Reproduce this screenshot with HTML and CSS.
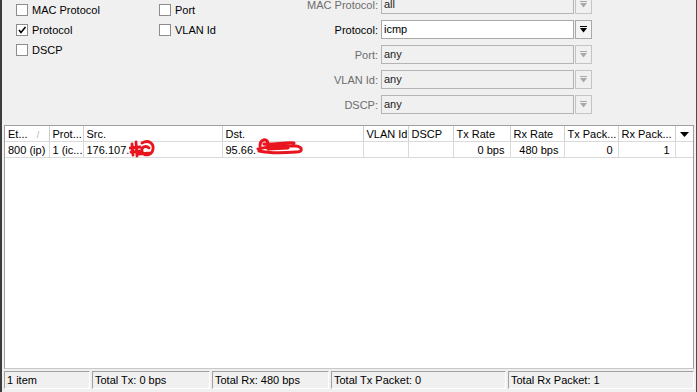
FILE: index.html
```html
<!DOCTYPE html>
<html lang="en">
<head>
    <meta charset="UTF-8">
    <meta name="viewport" content="width=device-width, initial-scale=1.0">
    <title>Torch</title>
    <link rel="stylesheet" href="styles.css">
</head>
<body>
    <div class="window">
        <div class="filters">
            <div class="checks">
                <label class="check"><span class="box"></span>MAC Protocol</label>
                <label class="check"><span class="box"></span>Port</label>
                <label class="check"><span class="box">
                    <svg width="10" height="10" viewBox="0 0 10 10"><polyline points="2,5 4,7.5 8.5,2" fill="none" stroke="#000" stroke-width="1.6"/></svg>
                </span>Protocol</label>
                <label class="check"><span class="box"></span>VLAN Id</label>
                <label class="check"><span class="box"></span>DSCP</label>
            </div>

            <div class="fields">
                <div class="field-row disabled">
                    <span class="field-label">MAC Protocol:</span>
                    <span class="field-input">all</span>
                    <span class="field-btn"><svg width="9" height="8" viewBox="0 0 9 8"><rect x="1" y="0" width="7" height="1"/><polygon points="1,2 8,2 4.5,6.5"/></svg></span>
                </div>
                <div class="field-row">
                    <span class="field-label">Protocol:</span>
                    <span class="field-input">icmp</span>
                    <span class="field-btn"><svg width="9" height="8" viewBox="0 0 9 8"><rect x="1" y="0" width="7" height="1"/><polygon points="1,2 8,2 4.5,6.5"/></svg></span>
                </div>
                <div class="field-row disabled">
                    <span class="field-label">Port:</span>
                    <span class="field-input">any</span>
                    <span class="field-btn"><svg width="9" height="8" viewBox="0 0 9 8"><rect x="1" y="0" width="7" height="1"/><polygon points="1,2 8,2 4.5,6.5"/></svg></span>
                </div>
                <div class="field-row disabled">
                    <span class="field-label">VLAN Id:</span>
                    <span class="field-input">any</span>
                    <span class="field-btn"><svg width="9" height="8" viewBox="0 0 9 8"><rect x="1" y="0" width="7" height="1"/><polygon points="1,2 8,2 4.5,6.5"/></svg></span>
                </div>
                <div class="field-row disabled">
                    <span class="field-label">DSCP:</span>
                    <span class="field-input">any</span>
                    <span class="field-btn"><svg width="9" height="8" viewBox="0 0 9 8"><rect x="1" y="0" width="7" height="1"/><polygon points="1,2 8,2 4.5,6.5"/></svg></span>
                </div>
            </div>
        </div>

        <div class="list">
            <table class="grid">
                <colgroup>
                    <col style="width: 44px"><col style="width: 34px"><col style="width: 139px"><col style="width: 141px">
                    <col style="width: 45px"><col style="width: 45px"><col style="width: 57px"><col style="width: 54px">
                    <col style="width: 54px"><col style="width: 57px"><col>
                </colgroup>
                <thead>
                    <tr>
                        <th>Et... <span class="sort">/</span></th>
                        <th>Prot...</th>
                        <th>Src.</th>
                        <th>Dst.</th>
                        <th>VLAN Id</th>
                        <th>DSCP</th>
                        <th>Tx Rate</th>
                        <th>Rx Rate</th>
                        <th>Tx Pack...</th>
                        <th>Rx Pack...</th>
                        <th class="menu"><svg width="9" height="6" viewBox="0 0 9 6"><polygon points="0,0 9,0 4.5,5"/></svg></th>
                    </tr>
                </thead>
                <tbody>
                    <tr>
                        <td>800 (ip)</td>
                        <td>1 (ic...</td>
                        <td>176.107.<span class="redact"><svg class="scribble src" width="26" height="20" viewBox="0 0 26 20"><path d="M3,6 L4,17 M7,4 L8,18 M1,10 L11,9 M2,14 L12,13 M13,5 C20,1 25,6 24,11 C23,18 14,19 13,13 C12,9 17,7 20,10 M10,16 L22,15" fill="none" stroke="#e8141e" stroke-width="2.8" stroke-linecap="round"/></svg></span></td>
                        <td>95.66.<span class="redact"><svg class="scribble dst" width="48" height="18" viewBox="0 0 48 18"><path d="M4,9 C4,2 11,1 12,6 M2,12 C10,10 25,8 40,9 C47,10 47,15 40,15 C28,16 12,16 3,14 M8,7 C16,8 30,5 38,6 M12,12 L32,11" fill="none" stroke="#e8141e" stroke-width="3" stroke-linecap="round"/></svg></span></td>
                        <td></td>
                        <td></td>
                        <td class="num">0 bps</td>
                        <td class="num">480 bps</td>
                        <td class="num">0</td>
                        <td class="num">1</td>
                        <td class="empty"></td>
                    </tr>
                </tbody>
            </table>
        </div>

        <div class="status">
            <span class="cell" style="width: 82px">1 item</span>
            <span class="cell" style="width: 114px">Total Tx: 0 bps</span>
            <span class="cell" style="width: 113px">Total Rx: 480 bps</span>
            <span class="cell" style="width: 171px">Total Tx Packet: 0</span>
            <span class="cell cell-last">Total Rx Packet: 1</span>
        </div>
    </div>
</body>
</html>
```

FILE: styles.css
```css
html, body {
    margin: 0;
    padding: 0;
    background-color: #f0f0f0;
}

body {
    font-family: "Liberation Sans", Arial, sans-serif;
    font-size: 11px;
    color: #000;
}

.window {
    height: 392px;
    box-sizing: border-box;
    border-left: 2px solid #3c3c3c;
    border-right: 1px solid #4a4a4a;
    display: flex;
    flex-direction: column;
    overflow: hidden;
}

/* filtros de cima */
.filters {
    display: flex;
    height: 125px;
    flex-shrink: 0;
}

.checks {
    width: 288px;
    padding-left: 14px;
    box-sizing: border-box;
    display: grid;
    grid-template-columns: 143px 1fr;
    grid-auto-rows: 20px;
    align-content: start;
}

.check {
    display: flex;
    align-items: center;
    height: 20px;
}

.box {
    width: 10px;
    height: 10px;
    border: 1px solid #8c8c8c;
    background-color: #fff;
    margin-right: 4px;
    display: flex;
    align-items: center;
    justify-content: center;
}

.box svg {
    display: block;
}

.fields {
    display: flex;
    flex-direction: column;
    gap: 6px;
    margin-top: -5px;
}

.field-row {
    display: flex;
    align-items: center;
    height: 19px;
}

.field-label {
    width: 88px;
    text-align: right;
    margin-right: 3px;
    color: #000;
}

.field-input {
    width: 189px;
    height: 17px;
    line-height: 17px;
    border: 1px solid #a9a9a9;
    background-color: #fff;
    padding-left: 2px;
    box-sizing: content-box;
    margin-right: 1px;
}

.field-btn {
    width: 15px;
    height: 17px;
    border: 1px solid #a9a9a9;
    background-color: #f4f4f4;
    display: flex;
    align-items: center;
    justify-content: center;
}

.field-btn svg {
    fill: #000;
}

.field-row.disabled .field-label {
    color: #6d6d6d;
}

.field-row.disabled .field-input {
    background-color: #f0f0f0;
    border-color: #b4b4b4;
    color: #222;
}

.field-row.disabled .field-btn {
    border-color: #c4c4c4;
    background-color: #f0f0f0;
}

.field-row.disabled .field-btn svg {
    fill: #a8a8a8;
}

/* lista */
.list {
    flex: 1;
    margin: 0 2px 0 2px;
    border: 1px solid #a0a0a0;
    border-bottom-color: #c8c8c8;
    background-color: #fff;
}

.grid {
    border-collapse: collapse;
    table-layout: fixed;
    width: 100%;
}

.grid th, .grid td {
    height: 15px;
    padding: 0 0 0 3px;
    text-align: left;
    font-weight: normal;
    white-space: nowrap;
    overflow: visible;
    border-right: 1px solid #dadada;
    border-bottom: 1px solid #dadada;
}

.grid th {
    border-right-color: #cfcfcf;
}

.grid .num {
    text-align: right;
    padding-right: 5px;
}

.grid .menu {
    border-right: none;
    text-align: center;
    padding: 0;
}

.grid .empty {
    border-right: none;
}

.sort {
    color: #b0b0b0;
    font-size: 9px;
    margin-left: 6px;
}

/* rabiscos vermelhos por cima do texto */
.redact {
    position: relative;
    display: inline-block;
    width: 0;
    height: 10px;
}

.scribble {
    position: absolute;
    left: 0;
}

.scribble.src {
    top: -6px;
}

.scribble.dst {
    top: -7px;
}

/* barra de status */
.status {
    display: flex;
    height: 23px;
    padding: 2px 2px 3px 2px;
    box-sizing: border-box;
    gap: 2px;
    flex-shrink: 0;
}

.cell {
    border-top: 1px solid #a0a0a0;
    border-left: 1px solid #a0a0a0;
    border-right: 1px solid #fff;
    border-bottom: 1px solid #fff;
    padding-left: 2px;
    line-height: 16px;
    white-space: nowrap;
}

.cell-last {
    flex: 1;
}
```
